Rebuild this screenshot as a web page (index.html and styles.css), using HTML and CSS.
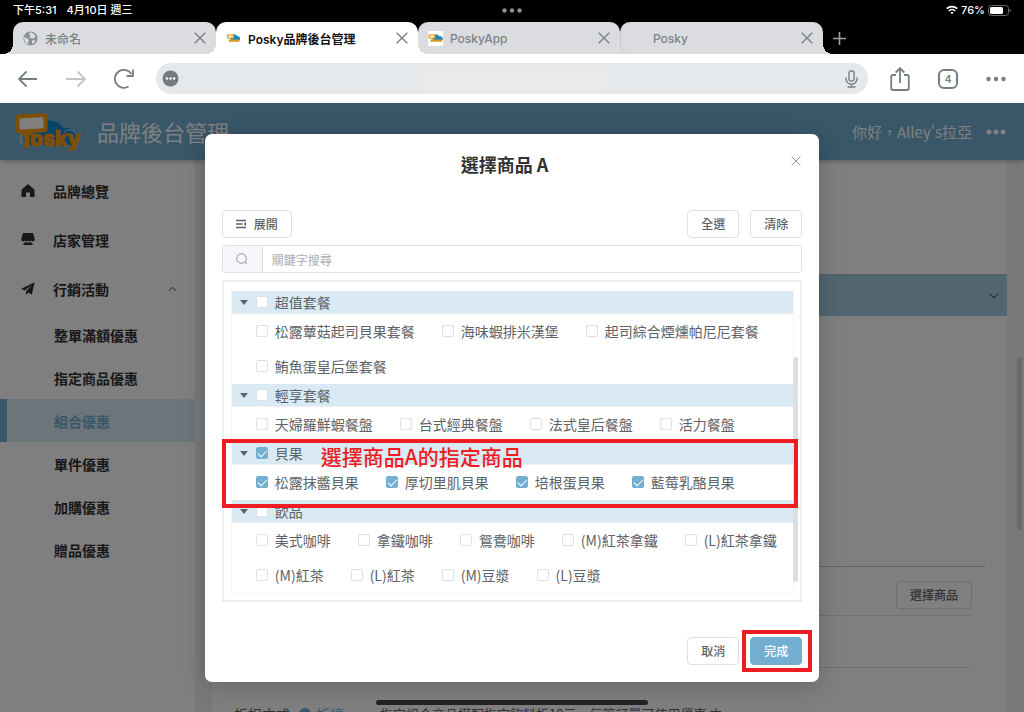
FILE: index.html
```html
<!DOCTYPE html>
<html lang="zh-Hant">
<head>
<meta charset="utf-8">
<meta name="viewport" content="width=device-width, initial-scale=1">
<title>Posky品牌後台管理</title>
<link rel="stylesheet" href="styles.css">
</head>
<body>

<div class="status-bar">
    <div class="status-left"><span>下午5:31</span><span>4月10日 週三</span></div>
    <svg class="status-dots" width="20" height="5" viewBox="0 0 20 5"><circle cx="2.5" cy="2.5" r="2.2"/><circle cx="10" cy="2.5" r="2.2"/><circle cx="17.5" cy="2.5" r="2.2"/></svg>
    <div class="status-right">
        <svg width="12" height="10" viewBox="0 0 12 10" fill="none" stroke="#fff" stroke-width="1.7"><path d="M.8 3.7a7.4 7.4 0 0 1 10.4 0M2.8 6a4.6 4.6 0 0 1 6.4 0"/><path d="M6 9.3 4.4 7.7a2.3 2.3 0 0 1 3.2 0z" fill="#fff" stroke="none"/></svg>
        <span>76%</span>
        <svg width="23" height="11" viewBox="0 0 23 11"><rect x=".5" y=".5" width="20" height="10" rx="3" fill="none" stroke="#6b6b6b"/><rect x="2" y="2" width="13" height="7" rx="1.5" fill="#fff"/><path d="M21.5 4v3q1.3-.4 1.3-1.5T21.5 4z" fill="#6b6b6b"/></svg>
    </div>
</div>

<nav class="tabs">
    <div class="tab tab-first">
        <svg class="favicon" viewBox="0 0 15 15"><circle cx="7.5" cy="7.5" r="7" fill="#8a9094"/><path d="M1.200 6 4.500 7.500 6 9.500l-1 1.500.5 2.500Q1.500 12 1.200 7zM6.500 1.500l-.5 2 1.500 1-1 2 2.500 1 2.500-.5L12.500 5Q11 2 8.500 1.400zM9 9.500l3-.5-.5 2.500-2.500 1.500z" fill="#dbdce0"/></svg>
        <span class="tab-title">未命名</span>
        <button class="tab-close" aria-label="關閉"><svg viewBox="0 0 12 12"><path d="M.7.7l10.600 10.600M11.300.7.7 11.300"/></svg></button>
    </div>
    <div class="tab tab-active">
        <svg class="favicon" viewBox="0 0 15 15"><path d="M5 9a3.500 3.500 0 0 1 6-4 3 3 0 0 1 3 4z" fill="#1687c0"/><rect x="1.700" y="4" width="5.500" height="3" fill="#fff" stroke="#f0a020" stroke-width="1.300"/><path d="M3 8.500h10.500v2.300H3z" fill="#d99a28"/></svg>
        <span class="tab-title">Posky品牌後台管理</span>
        <button class="tab-close" aria-label="關閉"><svg viewBox="0 0 12 12"><path d="M.7.7l10.600 10.600M11.300.7.7 11.300"/></svg></button>
    </div>
    <div class="tab tab-joined">
        <svg class="favicon" viewBox="0 0 15 15"><path d="M0 0h15v15H0z" fill="#fff"/><path d="M5 9a3.500 3.500 0 0 1 6-4 3 3 0 0 1 3.500 4z" fill="#1687c0"/><rect x="1.200" y="4" width="5.500" height="3" fill="#fff" stroke="#f0a020" stroke-width="1.300"/><path d="M2.500 8.500H14v2.300H2.500z" fill="#d99a28"/></svg>
        <span class="tab-title">PoskyApp</span>
        <button class="tab-close" aria-label="關閉"><svg viewBox="0 0 12 12"><path d="M.7.7l10.600 10.600M11.300.7.7 11.300"/></svg></button>
    </div>
    <div class="tab tab-last">
        <span class="favicon"></span>
        <span class="tab-title">Posky</span>
        <button class="tab-close" aria-label="關閉"><svg viewBox="0 0 12 12"><path d="M.7.7l10.600 10.600M11.300.7.7 11.300"/></svg></button>
    </div>
    <button class="tab-new" aria-label="新分頁"><svg width="13" height="13" viewBox="0 0 13 13"><path d="M6.500 0v13M0 6.500h13"/></svg></button>
</nav>

<div class="toolbar">
    <div class="toolbar-group">
        <button class="tool" aria-label="上一頁"><svg viewBox="0 0 20 20"><path d="M19 10H1.500M8.500 2.500 1 10l7.500 7.500"/></svg></button>
        <button class="tool tool-off" aria-label="下一頁"><svg viewBox="0 0 20 20"><path d="M0 10h18.500M11.500 2.500 19 10l-7.500 7.500"/></svg></button>
        <button class="tool" aria-label="重新載入"><svg viewBox="0 0 20 20"><path d="M14.500 17.500A9 9 0 1 1 17.500 5M19 .5V7h-6.500"/></svg></button>
    </div>
    <div class="address">
        <button class="address-site" aria-label="網站資訊"><svg width="17" height="17" viewBox="0 0 17 17"><circle cx="8.500" cy="8.500" r="8" fill="#757c80"/><g fill="#fff"><circle cx="4.900" cy="8.500" r="1.200"/><circle cx="8.500" cy="8.500" r="1.200"/><circle cx="12.100" cy="8.500" r="1.200"/></g></svg></button>
        <input class="address-input" type="text" aria-label="網址">
        <button class="address-mic" aria-label="語音搜尋"><svg width="13" height="18" viewBox="0 0 13 18" fill="none" stroke="#7d8285" stroke-width="1.400"><rect x="3.900" y=".8" width="5.200" height="10.400" rx="2.600"/><path d="M1 7.500v1.300a5.500 5.500 0 0 0 11 0V7.500M6.500 14.300v2.500M2.500 17h8"/></svg></button>
    </div>
    <div class="toolbar-group">
        <button class="tool" aria-label="分享"><svg viewBox="0 0 20 24"><path d="M6 8H3a1.800 1.800 0 0 0-1.800 1.800v11.400A1.800 1.800 0 0 0 3 23h14a1.800 1.800 0 0 0 1.800-1.800V9.800A1.800 1.800 0 0 0 17 8h-3M10 16V1.500M5.700 5.500 10 1.200l4.300 4.300"/></svg></button>
        <button class="tool tab-count" aria-label="分頁">4</button>
        <button class="tool" aria-label="更多"><svg viewBox="0 0 20 6"><g fill="#757d81" stroke="none"><circle cx="2.500" cy="3" r="2.200"/><circle cx="10" cy="3" r="2.200"/><circle cx="17.500" cy="3" r="2.200"/></g></svg></button>
    </div>
</div>

<div class="app">
    <header class="app-header">
        <svg class="logo" width="66" height="38" viewBox="0 0 66 38">
            <path d="M14 32a9 9 0 0 1 8-17A15 15 0 0 1 48 15q10-2 13 8l-3 9H14z" fill="#1088d0"/>
            <path d="M49 19a7 7 0 0 1 12 6" fill="none" stroke="#7cc0e6" stroke-width="1.500"/>
            <path d="M7 20q-3 5 0 12" fill="none" stroke="#9ed4ee" stroke-width="2"/>
            <path d="M7 20h11M12 17v18" stroke="#ff9f0a" stroke-width="5" fill="none"/>
            <rect x="2.500" y="3" width="28" height="15" rx="2" fill="#fff" stroke="#ff9f0a" stroke-width="4" transform="rotate(-3 16 10)"/>
            <text x="15" y="33" class="logo-text">osky</text>
        </svg>
        <span class="app-title">品牌後台管理</span>
        <span class="user">你好，Alley's拉亞</span>
        <button class="more" aria-label="選單"><svg width="20" height="6" viewBox="0 0 20 6"><g fill="#fff"><circle cx="3" cy="3" r="2.500"/><circle cx="10" cy="3" r="2.500"/><circle cx="17" cy="3" r="2.500"/></g></svg></button>
    </header>

    <div class="app-body">
        <nav class="sidebar">
            <a class="nav-item" href="#"><svg viewBox="0 0 14 14"><path d="M7 0 .5 5.800V13H5V8.500h4V13h4.500V5.800z"/></svg>品牌總覽</a>
            <a class="nav-item" href="#"><svg viewBox="0 0 14 14"><path d="M2 0h10l1.500 5.500a1.800 1.800 0 0 1-3 2 2 2 0 0 1-3.500 0 2 2 0 0 1-3.500 0 1.800 1.800 0 0 1-3-2zM2.500 9.500h9V12h-9z"/></svg>店家管理</a>
            <a class="nav-item" href="#"><svg viewBox="0 0 14 14"><path d="M13.700.3.3 6.800l3.300 1.700L11 3 5 9.300V13l2-2.500 3.800 2z"/></svg>行銷活動
                <svg class="nav-arrow" viewBox="0 0 10 6"><path d="M1 5l4-4 4 4"/></svg></a>
            <a class="nav-sub" href="#">整單滿額優惠</a>
            <a class="nav-sub" href="#">指定商品優惠</a>
            <a class="nav-sub nav-sub-active" href="#">組合優惠</a>
            <a class="nav-sub" href="#">單件優惠</a>
            <a class="nav-sub" href="#">加購優惠</a>
            <a class="nav-sub" href="#">贈品優惠</a>
        </nav>

        <main class="content">
            <section class="block block-top"></section>
            <button class="band" aria-label="收合"><svg width="10" height="6" viewBox="0 0 10 6"><path d="M1 1l4 4 4-4"/></svg></button>
            <section class="block block-form"></section>
            <div class="pick-row"><button class="btn btn-ghost">選擇商品</button></div>
            <div class="empty-row"></div>
            <div class="discount-row">
                <span class="discount-label">折扣方式</span>
                <label class="discount-type"><input class="radio" type="radio" checked>折讓</label>
                <span class="discount-hint">指定組合商品搭配指定飲料折10元，每筆訂單可使用優惠 中</span>
            </div>
        </main>
        <div class="page-scroll"></div>
    </div>

    <div class="overlay">
        <div class="dialog" role="dialog" aria-labelledby="dialog-title">
            <div class="dialog-header">
                <h2 class="dialog-title" id="dialog-title">選擇商品 A</h2>
                <button class="dialog-close" aria-label="關閉"><svg width="10" height="10" viewBox="0 0 10 10"><path d="M.7.7l8.600 8.600M9.300.7.7 9.300"/></svg></button>
            </div>

            <div class="actions">
                <button class="btn btn-expand"><svg width="10" height="10" viewBox="0 0 10 10"><path d="M0 1.500h10M0 5h6.500M0 8.500h10"/><path d="M10 3v4L7.500 5z" fill="#606266" stroke="none"/></svg>展開</button>
                <button class="btn">全選</button>
                <button class="btn">清除</button>
            </div>

            <div class="search">
                <label class="search-icon" for="keyword"><svg width="12" height="12" viewBox="0 0 12 12"><circle cx="5.500" cy="5.500" r="4.800"/><path d="M9 9l2.300 2.300"/></svg></label>
                <input class="search-input" id="keyword" type="text" placeholder="關鍵字搜尋" aria-label="關鍵字搜尋">
            </div>

            <div class="list-wrap">
                <div class="list">
                    <section class="group">
                        <div class="group-head"><button class="caret" aria-label="收合"></button><label class="check"><input type="checkbox">超值套餐</label></div>
                        <div class="group-items">
                            <label class="check"><input type="checkbox">松露蕈菇起司貝果套餐</label>
                            <label class="check"><input type="checkbox">海味蝦排米漢堡</label>
                            <label class="check"><input type="checkbox">起司綜合煙燻帕尼尼套餐</label>
                            <label class="check"><input type="checkbox">鮪魚蛋皇后堡套餐</label>
                        </div>
                    </section>
                    <section class="group">
                        <div class="group-head"><button class="caret" aria-label="收合"></button><label class="check"><input type="checkbox">輕享套餐</label></div>
                        <div class="group-items">
                            <label class="check"><input type="checkbox">天婦羅鮮蝦餐盤</label>
                            <label class="check"><input type="checkbox">台式經典餐盤</label>
                            <label class="check"><input type="checkbox">法式皇后餐盤</label>
                            <label class="check"><input type="checkbox">活力餐盤</label>
                        </div>
                    </section>
                    <section class="group">
                        <div class="group-head"><button class="caret" aria-label="收合"></button><label class="check"><input type="checkbox" checked>貝果</label></div>
                        <div class="group-items">
                            <label class="check"><input type="checkbox" checked>松露抹醬貝果</label>
                            <label class="check"><input type="checkbox" checked>厚切里肌貝果</label>
                            <label class="check"><input type="checkbox" checked>培根蛋貝果</label>
                            <label class="check"><input type="checkbox" checked>藍莓乳酪貝果</label>
                        </div>
                        <div class="mark mark-group">選擇商品A的指定商品</div>
                    </section>
                    <section class="group">
                        <div class="group-head"><button class="caret" aria-label="收合"></button><label class="check"><input type="checkbox">飲品</label></div>
                        <div class="group-items">
                            <label class="check"><input type="checkbox">美式咖啡</label>
                            <label class="check"><input type="checkbox">拿鐵咖啡</label>
                            <label class="check"><input type="checkbox">鴛鴦咖啡</label>
                            <label class="check"><input type="checkbox">(M)紅茶拿鐵</label>
                            <label class="check"><input type="checkbox">(L)紅茶拿鐵</label>
                            <label class="check"><input type="checkbox">(M)紅茶</label>
                            <label class="check"><input type="checkbox">(L)紅茶</label>
                            <label class="check"><input type="checkbox">(M)豆漿</label>
                            <label class="check"><input type="checkbox">(L)豆漿</label>
                        </div>
                    </section>
                </div>
                <div class="list-scroll"></div>
            </div>

            <div class="dialog-footer">
                <button class="btn">取消</button>
                <div class="done">
                    <button class="btn btn-primary">完成</button>
                    <div class="mark mark-done"></div>
                </div>
            </div>
        </div>
    </div>

    <div class="home-bar"></div>
</div>

</body>
</html>
```
FILE: styles.css
```css
* {
    box-sizing: border-box;
}

body {
    display: flex;
    flex-direction: column;
    height: 100vh;
    margin: 0;
    overflow: hidden;
    background-color: #fff;
    font-family: "Noto Sans CJK TC", sans-serif;
    font-size: 14px;
    color: #606266;
}

button {
    display: flex;
    align-items: center;
    justify-content: center;
    padding: 0;
    border: none;
    background: none;
    font-family: inherit;
    cursor: pointer;
}

a {
    color: inherit;
    text-decoration: none;
}

svg {
    display: block;
    flex-shrink: 0;
}


/* status bar */
.status-bar {
    display: grid;
    grid-template-columns: 1fr auto 1fr;
    align-items: center;
    height: 22px;
    padding: 0 13px 2px;
    background-color: #000;
    color: #fff;
    font-family: Inter, "Noto Sans CJK TC", sans-serif;
    font-size: 11px;
    font-weight: 500;
    line-height: 20px;
}

.status-left {
    display: flex;
    gap: 10px;
}

.status-dots {
    fill: #8e8e8e;
}

.status-right {
    display: flex;
    align-items: center;
    justify-content: flex-end;
    gap: 3px;
}


/* tabs */
.tabs {
    display: flex;
    height: 32px;
    padding-left: 13px;
    background-color: #000;
    font-family: Inter, "Noto Sans CJK TC", sans-serif;
    font-size: 12px;
    color: #7b8286;
}

.tab {
    position: relative;
    display: flex;
    flex: 0 1 202px;
    align-items: center;
    gap: 7px;
    padding: 0 10px;
    border-radius: 10px 10px 0 0;
    background-color: #dbdce0;
    font-weight: 500;
}

.tab-first {
    flex-basis: 203px;
}

.tab-first::before,
.tab-last::after,
.tab-active::before,
.tab-active::after {
    content: "";
    position: absolute;
    bottom: 0;
    width: 10px;
    height: 10px;
}

.tab-first::before {
    right: 100%;
    background: radial-gradient(circle at 0 0, transparent 10px, #dbdce0 10px);
}

.tab-last::after {
    left: 100%;
    background: radial-gradient(circle at 100% 0, transparent 10px, #dbdce0 10px);
}

.tab-active::before {
    right: 100%;
    background: radial-gradient(circle at 0 0, transparent 10px, #fff 10px);
}

.tab-active::after {
    left: 100%;
    background: radial-gradient(circle at 100% 0, transparent 10px, #fff 10px);
}

.tab-joined::after {
    content: "";
    position: absolute;
    bottom: 0;
    left: 100%;
    width: 12px;
    height: 20px;
    background-color: #dbdce0;
}

.tab-active {
    z-index: 1;
    background-color: #fff;
    color: #111;
    font-weight: 600;
}

.tab-last {
    flex-basis: 203px;
    border-left: 1px solid #c3c5c8;
    border-radius: 10px 10px 0 10px;
}

.favicon {
    width: 15px;
    height: 15px;
}

.tab-title {
    flex: 1;
    white-space: nowrap;
}

.tab-close svg {
    width: 12px;
    height: 12px;
    fill: none;
    stroke: #7b8286;
    stroke-width: 1.4;
}

.tab-new {
    margin-left: 10px;
}

.tab-new svg {
    fill: none;
    stroke: #9ba1a5;
    stroke-width: 1.6;
}


/* browser toolbar */
.toolbar {
    display: flex;
    align-items: center;
    gap: 22px;
    height: 49px;
    padding: 0 18px;
    background-color: #fff;
}

.toolbar-group {
    display: flex;
    align-items: center;
    gap: 28px;
}

.tool svg {
    width: 20px;
    fill: none;
    stroke: #757d81;
    stroke-width: 1.8;
}

.tool-off svg {
    stroke: #c3c5c7;
}

.tab-count {
    width: 20px;
    height: 20px;
    border: 2px solid #757d81;
    border-radius: 6px;
    color: #757d81;
    font-family: Inter, sans-serif;
    font-size: 10px;
    font-weight: 600;
}

.address {
    display: flex;
    flex: 1;
    align-items: center;
    height: 31px;
    padding: 0 10px 0 6px;
    border-radius: 16px;
    background-color: #e6e9ec;
}

.address-input {
    flex: 1;
    height: 31px;
    border: none;
    outline: none;
    background: linear-gradient(#eaeaea, #eaeaea) center / 189px 23px no-repeat;
}


/* app */
.app {
    position: relative;
    display: flex;
    flex: 1;
    flex-direction: column;
    min-height: 0;
    overflow: hidden;
    background-color: #f0f2f5;
}

.app-header {
    position: relative;
    z-index: 1;
    display: flex;
    flex-shrink: 0;
    align-items: center;
    height: 57px;
    padding: 0 18px 0 15px;
    background-color: #72afd3;
    box-shadow: 0 1px 5px rgba(0, 0, 0, .3);
    color: #fff;
}

.logo-text {
    fill: #ff9f0a;
    stroke: #ff9f0a;
    stroke-width: 1;
    font-family: Inter, sans-serif;
    font-size: 21px;
    font-weight: 800;
}

.app-title {
    flex: 1;
    margin-left: 16px;
    padding-bottom: 2px;
    font-size: 22px;
}

.user {
    margin-right: 14px;
    font-size: 15px;
}

.app-body {
    position: relative;
    display: flex;
    flex: 1;
    min-height: 0;
}

.sidebar {
    width: 195px;
    padding-top: 6px;
    background-color: #fff;
    color: #303133;
    font-weight: 700;
}

.nav-item {
    display: flex;
    align-items: center;
    gap: 18px;
    height: 49px;
    padding: 0 18px 0 21px;
}

.nav-item svg {
    width: 14px;
    height: 14px;
    fill: #303133;
}

.nav-item .nav-arrow {
    width: 9px;
    height: 6px;
    margin-left: auto;
    fill: none;
    stroke: #303133;
}

.nav-sub {
    display: flex;
    align-items: center;
    height: 43px;
    padding-left: 54px;
}

.nav-sub-active {
    padding-left: 47px;
    border-left: 7px solid #72afd3;
    background-color: #d9ebf5;
    color: #72afd3;
}

.content {
    flex: 1;
    margin: 0 17px;
    background-color: #fff;
}

.block-top {
    height: 114px;
}

.band {
    justify-content: flex-end;
    width: 100%;
    height: 42px;
    padding-right: 8px;
    border-top: 1px solid #aab9c2;
    background-color: #a3cce2;
}

.band svg {
    fill: none;
    stroke: #303133;
}

.block-form {
    height: 251px;
    margin: 0 22px;
    border-bottom: 1px solid #c0c4cc;
}

.pick-row {
    display: flex;
    align-items: center;
    justify-content: flex-end;
    height: 49px;
    margin: 0 35px 0 22px;
    padding-top: 7px;
    border-bottom: 1px solid #dcdfe6;
}

.btn-ghost {
    background-color: transparent;
}

.empty-row {
    height: 52px;
    margin: 0 37px 0 22px;
    border-bottom: 1px solid #dcdfe6;
}

.discount-row {
    display: flex;
    align-items: center;
    margin: 36px 22px 0;
    line-height: 20px;
    white-space: nowrap;
}

.discount-label {
    width: 65px;
}

.discount-type {
    display: flex;
    align-items: center;
    gap: 5px;
    width: 81px;
    color: #72afd3;
}

.radio {
    appearance: none;
    width: 12px;
    height: 12px;
    margin: 0;
    border: 4px solid #72afd3;
    border-radius: 50%;
}

.discount-hint {
    font-size: 13px;
}

.page-scroll {
    position: absolute;
    top: 197px;
    right: 2px;
    width: 5px;
    height: 173px;
    border-radius: 3px;
    background-color: #cfd1d3;
}


/* dialog */
.overlay {
    position: absolute;
    inset: 0;
    z-index: 2;
    display: flex;
    align-items: flex-start;
    justify-content: center;
    padding-top: 31px;
    background-color: rgba(0, 0, 0, .5);
}

.dialog {
    width: 60%;
    padding: 0 17px 17px;
    border-radius: 7px;
    background-color: #fff;
    box-shadow: 0 4px 24px rgba(0, 0, 0, .2);
}

.dialog-header {
    position: relative;
    display: flex;
    align-items: center;
    justify-content: center;
    height: 60px;
    margin-bottom: 16px;
    padding-right: 15px;
}

.dialog-title {
    margin: 0;
    color: #303133;
    font-size: 18px;
    font-weight: 700;
}

.dialog-close {
    position: absolute;
    top: 22px;
    right: 1px;
}

.dialog-close svg {
    fill: none;
    stroke: #909399;
}

.btn {
    height: 28px;
    padding: 0 13px 1px;
    border: 1px solid #dcdfe6;
    border-radius: 4px;
    background-color: #fff;
    color: #606266;
    font-size: 12px;
    font-weight: 500;
}

.btn-expand {
    gap: 8px;
    margin-right: auto;
}

.btn-expand svg {
    fill: none;
    stroke: #606266;
    stroke-width: 1.3;
}

.btn-primary {
    border-color: #72afd3;
    background-color: #72afd3;
    color: #fff;
}

.actions {
    display: flex;
    gap: 11px;
    margin-bottom: 7px;
}

.search {
    display: flex;
    height: 28px;
    margin-bottom: 7px;
    border: 1px solid #dcdfe6;
    border-radius: 4px;
    overflow: hidden;
}

.search-icon {
    display: flex;
    align-items: center;
    justify-content: center;
    width: 40px;
    border-right: 1px solid #dcdfe6;
    background-color: #f5f7fa;
}

.search-icon svg {
    fill: none;
    stroke: #909399;
}

.search-input {
    flex: 1;
    padding: 0 9px;
    border: none;
    outline: none;
    font-family: inherit;
    font-size: 12px;
}

.search-input::placeholder {
    color: #a8abb2;
}

.list-wrap {
    position: relative;
    padding: 6px 6px 6px 7px;
    border: 2px solid #ebeef5;
}

.list {
    padding-top: 3px;
    border: 1px solid #f2f4f8;
    border-top: none;
}

.list-scroll {
    position: absolute;
    top: 75px;
    right: 2px;
    width: 5px;
    height: 225px;
    border-radius: 3px;
    background-color: #dddee0;
}

.group {
    position: relative;
}

.group-head {
    display: flex;
    align-items: center;
    gap: 8px;
    height: 23px;
    padding-left: 8px;
    border-bottom: 1px solid #ebeef5;
    background-color: #d9eaf4;
}

.caret {
    border-top: 5px solid #606266;
    border-right: 4px solid transparent;
    border-left: 4px solid transparent;
}

.group-items {
    display: flex;
    flex-wrap: wrap;
    column-gap: 27px;
    padding-left: 24px;
}

.group-items .check {
    height: 35px;
    padding-bottom: 1px;
}

.check {
    display: flex;
    align-items: center;
    gap: 7px;
    white-space: nowrap;
}

.check input {
    position: relative;
    appearance: none;
    width: 12px;
    height: 12px;
    margin: 0;
    border: 1px solid #dcdfe6;
    border-radius: 2px;
    background-color: #fff;
}

.check input:checked {
    border-color: #72afd3;
    background-color: #72afd3;
}

.check input:checked::after {
    content: "";
    position: absolute;
    top: 0;
    left: 3px;
    width: 4px;
    height: 8px;
    border: solid #fff;
    border-width: 0 1px 1px 0;
    transform: rotate(45deg);
}

.dialog-footer {
    display: flex;
    justify-content: flex-end;
    gap: 11px;
    margin-top: 35px;
}

.done {
    position: relative;
}


/* red marks over the dialog */
.mark {
    position: absolute;
    z-index: 1;
    border: 4px solid #ee1c23;
    pointer-events: none;
}

.mark-group {
    inset: -3px -5px -8px -10px;
    padding-left: 95px;
    color: #ee1c23;
    font-size: 21px;
    font-weight: 500;
    line-height: 26px;
}

.mark-done {
    inset: -7px -10px -7px -8px;
}

.home-bar {
    position: absolute;
    bottom: 7px;
    left: 50%;
    z-index: 3;
    width: 272px;
    height: 5px;
    margin-left: -136px;
    border-radius: 3px;
    background-color: #222;
}
```
